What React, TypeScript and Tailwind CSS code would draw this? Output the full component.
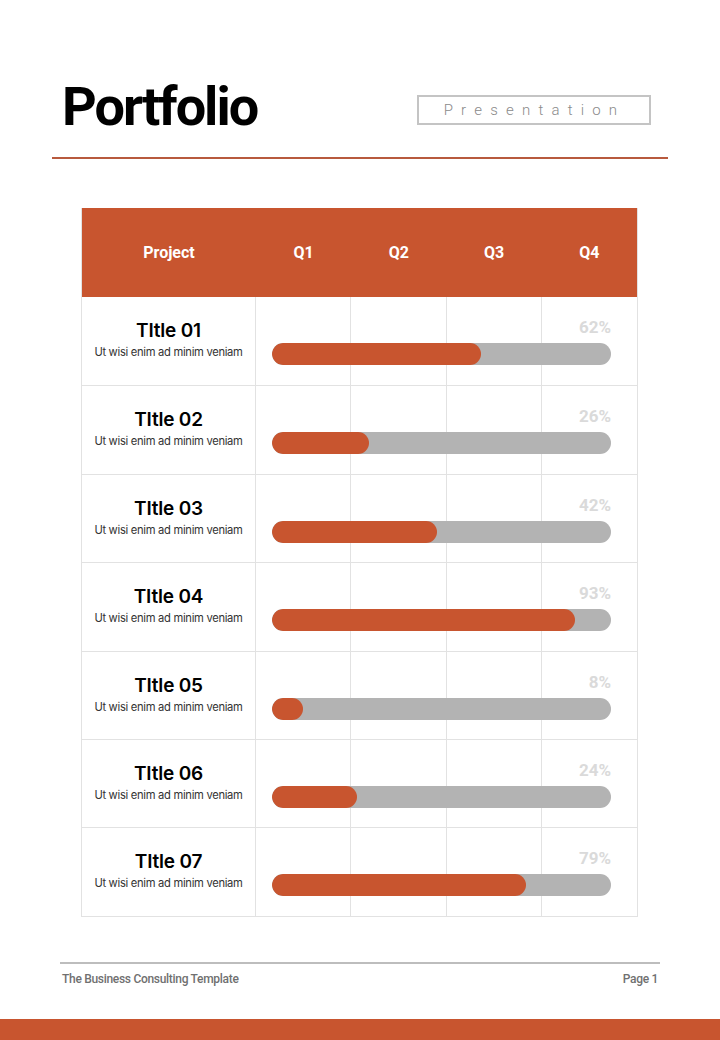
import React from "react";

const rows = [
  { title: "TItle 01", value: 62, fill: 209 },
  { title: "TItle 02", value: 26, fill: 97 },
  { title: "TItle 03", value: 42, fill: 165 },
  { title: "TItle 04", value: 93, fill: 303 },
  { title: "TItle 05", value: 8, fill: 31 },
  { title: "TItle 06", value: 24, fill: 85 },
  { title: "TItle 07", value: 79, fill: 254 },
];

export default function App() {
  return (
    <div className="w-[720px] h-[1040px] bg-white flex flex-col font-['Inter',sans-serif]">
      {/* Header */}
      <div className="flex justify-between pl-[62px] pr-[69px] pt-[79px] h-[142px] items-start">
        <h1 className="font-['Roboto',sans-serif] font-bold text-[54px] leading-[56px] tracking-[-2px] text-black">
          Portfolio
        </h1>
        <div className="mt-[16px] w-[234px] h-[30px] border-2 border-[#c4c4c4] flex items-center justify-center">
          <span className="font-['Roboto',sans-serif] font-light text-[15px] tracking-[8.2px] text-[#8a8a8a] pl-[1px]">
            Presentation
          </span>
        </div>
      </div>
      <div className="mx-[52px] mt-[15px] h-[2px] bg-[#b85a3e]" />

      {/* Table */}
      <div className="mx-[81px] mt-[49px] w-[557px] border border-[#e2e2e2] border-t-0">
        <div className="h-[89px] bg-[#c8552f] flex items-center text-white font-['Roboto',sans-serif] font-bold text-[16px]">
          <div className="w-[174px] text-center">Project</div>
          <div className="flex-1 grid grid-cols-4 text-center">
            <div>Q1</div>
            <div>Q2</div>
            <div>Q3</div>
            <div>Q4</div>
          </div>
        </div>
        {rows.map((row, i) => (
          <div
            key={i}
            className={`flex h-[88.4px] ${i > 0 ? "border-t border-[#e2e2e2]" : ""}`}
          >
            <div className="w-[174px] border-r border-[#e2e2e2] flex flex-col items-center pt-[21px]">
              <div className="text-[19px] font-semibold leading-[26px] text-black tracking-[-0.2px]">
                {row.title}
              </div>
              <div className="text-[11.2px] leading-[14px] text-[#333] tracking-[-0.3px] mt-[1px]">
                Ut wisi enim ad minim veniam
              </div>
            </div>
            <div className="relative flex-1">
              <div className="grid grid-cols-4 h-full">
                <div className="border-r border-[#e2e2e2]" />
                <div className="border-r border-[#e2e2e2]" />
                <div className="border-r border-[#e2e2e2]" />
                <div />
              </div>
              <div className="absolute left-[16px] right-[26px] top-[21px] flex flex-col">
                <div className="text-right font-['Roboto',sans-serif] font-bold text-[17px] leading-[18px] text-[#dadada]">
                  {row.value}%
                </div>
                <div className="mt-[7px] h-[22px] rounded-full bg-[#b3b3b3] overflow-hidden">
                  <div
                    className="h-full rounded-full bg-[#c8552f]"
                    style={{ width: `${row.fill}px` }}
                  />
                </div>
              </div>
            </div>
          </div>
        ))}
      </div>

      {/* Footer */}
      <div className="mx-[60px] mt-[45px] h-[2px] bg-[#bdbdbd]" />
      <div className="mx-[62px] mt-[6px] flex justify-between font-['Roboto',sans-serif] font-medium text-[12px] text-[#707070] tracking-[-0.3px]">
        <span>The Business Consulting Template</span>
        <span>Page 1</span>
      </div>
      <div className="mt-auto h-[21px] bg-[#c8552f]" />
    </div>
  );
}
